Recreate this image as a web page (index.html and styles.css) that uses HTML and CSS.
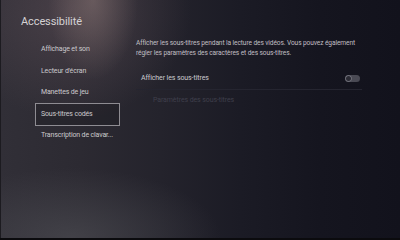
FILE: index.html
```html
<!DOCTYPE html>
<html lang="fr">
<head>
<meta charset="utf-8">
<link rel="stylesheet" href="styles.css">
</head>
<body>
<div class="screen">
  <h1 class="title">Accessibilité</h1>
  <div class="main">
    <nav class="menu">
      <div class="item">Affichage et son</div>
      <div class="item">Lecteur d'écran</div>
      <div class="item">Manettes de jeu</div>
      <div class="item selected">Sous-titres codés</div>
      <div class="item">Transcription de clavar...</div>
    </nav>
    <section class="content">
      <p class="desc">Afficher les sous-titres pendant la lecture des vidéos. Vous pouvez également régler les paramètres des caractères et des sous-titres.</p>
      <div class="row">
        <span>Afficher les sous-titres</span>
        <span class="toggle"><span class="knob"></span></span>
      </div>
      <div class="sub">Paramètres des sous-titres</div>
    </section>
  </div>
</div>
</body>
</html>
```
FILE: styles.css
```css
html, body {
  margin: 0;
  padding: 0;
  width: 100%;
  height: 100%;
  overflow: hidden;
  background: #0b0b0e;
}
.screen {
  width: 100%;
  height: calc(100vh - 2px);
  box-sizing: border-box;
  font-family: Roboto, "Liberation Sans", sans-serif;
  background:
    radial-gradient(ellipse 45px 80px at 92px 0px, rgba(150,128,125,0.45), rgba(150,128,125,0) 100%),
    radial-gradient(ellipse 120px 110px at 70px 10px, rgba(95,80,88,0.55), rgba(95,80,88,0) 100%),
    radial-gradient(ellipse 150px 70px at 70px 100%, rgba(80,80,86,0.6), rgba(80,80,86,0) 100%),
    linear-gradient(to right, #312f37 0%, #2c2a32 20%, #24232c 40%, #1b1b25 60%, #15151f 80%, #12121c 100%);
  display: flex;
  flex-direction: column;
  border-left: 1px solid #1c1b20;
}
.title {
  margin: 15px 0 0 20px;
  font-size: 11px;
  line-height: 13px;
  font-weight: 400;
  color: #d4d2d4;
  letter-spacing: -0.1px;
}
.main {
  display: flex;
  margin-top: 11px;
}
.menu {
  margin-left: 35px;
  width: 83px;
  display: flex;
  flex-direction: column;
}
.item {
  height: 21.5px;
  line-height: 21.5px;
  padding-left: 5px;
  font-size: 7px;
  color: #cbc9cc;
  white-space: nowrap;
  letter-spacing: -0.15px;
}
.item.selected {
  outline: 1px solid #8e8c92;
  outline-offset: 0.5px;
  background: rgba(20,18,24,0.25);
}
.content {
  margin-left: 17px;
  width: 226px;
  margin-top: 0;
}
.desc {
  margin: 0;
  font-size: 6.6px;
  line-height: 9.5px;
  color: #c0bfc4;
  letter-spacing: -0.1px;
}
.row {
  margin-top: 9px;
  height: 22px;
  display: flex;
  align-items: center;
  justify-content: space-between;
  padding-left: 5px;
  padding-right: 2px;
  font-size: 7px;
  color: #cbcace;
  border-bottom: 1px solid #252530;
  letter-spacing: -0.1px;
}
.toggle {
  width: 15px;
  height: 7px;
  border-radius: 4px;
  background: #4a4a54;
  display: flex;
  align-items: center;
  padding-left: 1px;
  box-sizing: border-box;
}
.knob {
  width: 5px;
  height: 5px;
  border-radius: 50%;
  background: #2a2a33;
  box-shadow: 0 0 0 0.7px #7a7a84;
}
.sub {
  height: 21px;
  line-height: 21px;
  padding-left: 17px;
  font-size: 7px;
  color: #3f3f4b;
  letter-spacing: -0.1px;
}
```
